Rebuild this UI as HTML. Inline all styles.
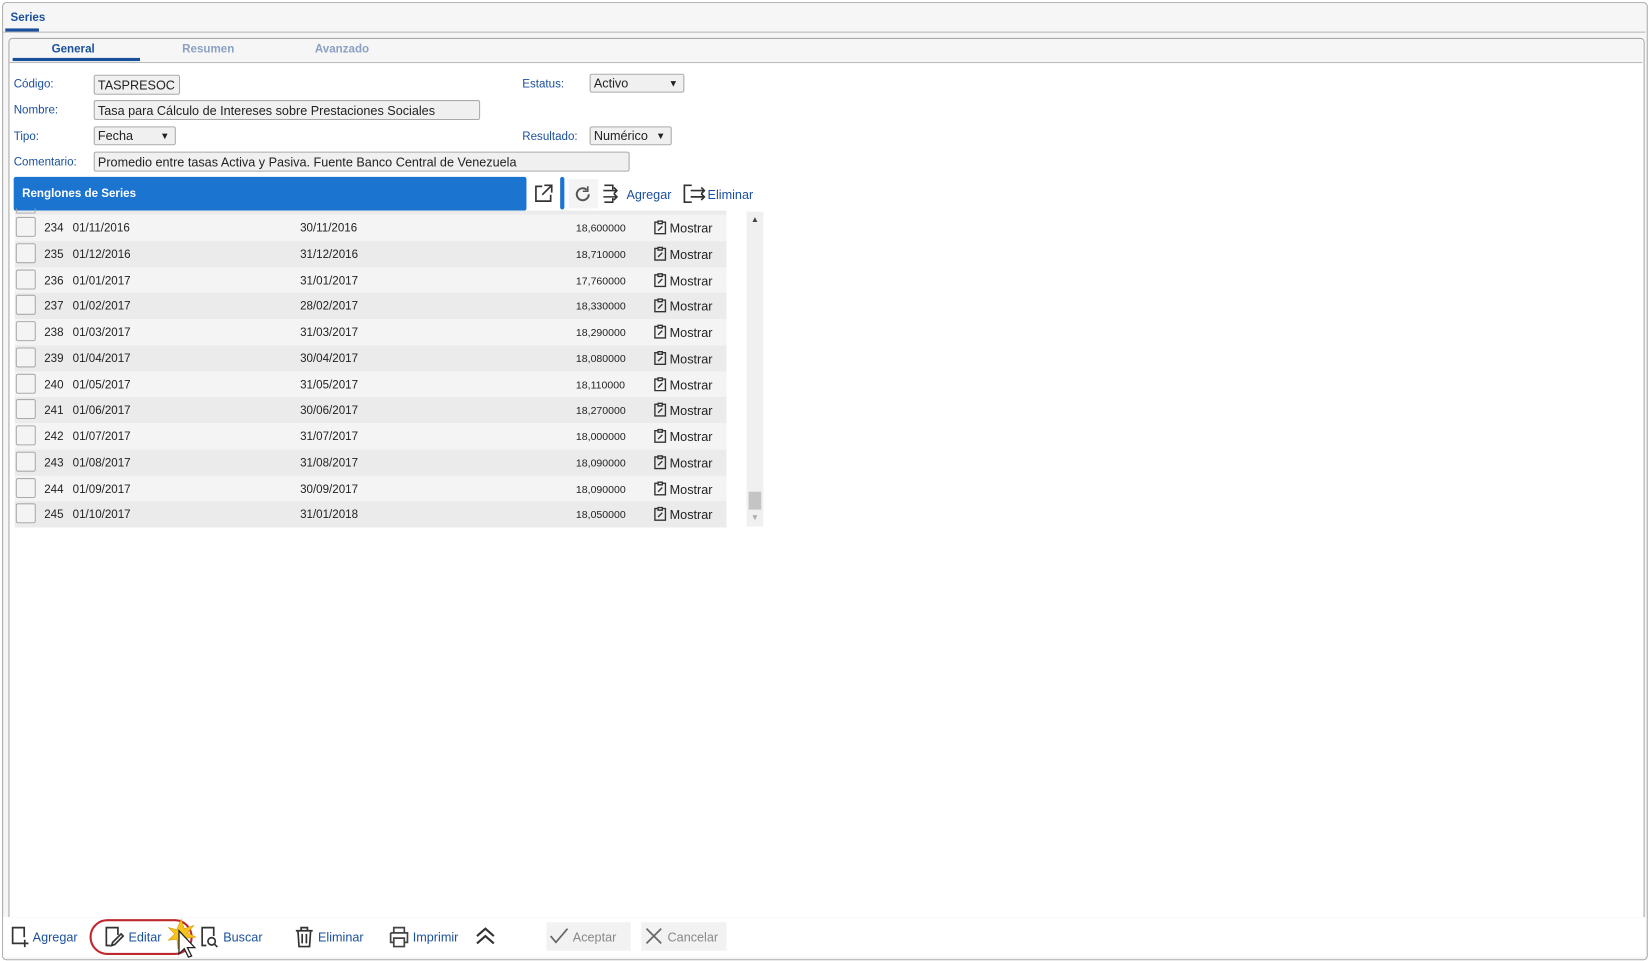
<!DOCTYPE html>
<html><head><meta charset="utf-8"><style>
html,body{margin:0;padding:0;background:#fff;width:1651px;height:961px;overflow:hidden}
#w{position:absolute;left:0;top:0;width:1568px;height:913px;transform:scale(1.0529);transform-origin:0 0;font-family:"Liberation Sans",sans-serif;color:#222}
.a{position:absolute}
.lbl{position:absolute;font-size:11px;color:#1a4f9c}
.inp{position:absolute;height:17px;border:1px solid #aaa;background:#f0f0f0;font-size:12px;line-height:17px;padding-left:3px;box-sizing:border-box;color:#222;border-radius:2px}
.row{position:absolute;left:14px;width:676px;height:25px;font-size:11px}
.cb{position:absolute;left:1px;top:2px;width:19px;height:19px;border:1px solid #aaa;border-radius:2px;background:#f4f4f4;box-sizing:border-box}
.row span{position:absolute;top:7px}
.bt{position:absolute;font-size:12px;color:#1a4f9c;top:883px}
</style></head><body><div id="w">
<div class="a" style="left:2px;top:2px;width:1561px;height:908px;border:1px solid #aaa;border-radius:4px;background:#f6f6f6"></div>
<div class="a" style="left:3px;top:3px;width:1560px;height:27px;border-bottom:1px solid #aaa;background:#f6f6f6;border-radius:4px 4px 0 0"></div>
<div class="a" style="left:10px;top:11px;font-size:11px;font-weight:bold;color:#1a4f9c">Series</div>
<div class="a" style="left:5px;top:27px;width:32px;height:3px;background:#1a4f9c"></div>
<div class="a" style="left:8px;top:36px;width:1552px;height:834px;border:1px solid #aaa;border-radius:4px 4px 0 0;background:#fff"></div>
<div class="a" style="left:9px;top:37px;width:1551px;height:22px;border-bottom:1px solid #aaa;background:#f6f6f6;border-radius:4px 4px 0 0"></div>
<div class="a" style="left:49px;top:41px;font-size:11px;font-weight:bold;color:#1a4f9c">General</div>
<div class="a" style="left:12px;top:55px;width:121px;height:3px;background:#1a4f9c"></div>
<div class="a" style="left:173px;top:41px;font-size:11px;font-weight:bold;color:#8aa0c4">Resumen</div>
<div class="a" style="left:299px;top:41px;font-size:11px;font-weight:bold;color:#8aa0c4">Avanzado</div>

<div class="lbl" style="left:13px;top:74px">Código:</div>
<div class="inp" style="left:89px;top:71px;width:82px;height:19px;line-height:19px">TASPRESOC</div>
<div class="lbl" style="left:496px;top:74px">Estatus:</div>
<div class="inp" style="left:560px;top:70px;width:90px;height:18px">Activo<span style="position:absolute;right:5px;font-size:9px">▼</span></div>
<div class="lbl" style="left:13px;top:99px">Nombre:</div>
<div class="inp" style="left:89px;top:95px;width:367px;height:19px;line-height:19px">Tasa para Cálculo de Intereses sobre Prestaciones Sociales</div>
<div class="lbl" style="left:13px;top:124px">Tipo:</div>
<div class="inp" style="left:89px;top:120px;width:78px;height:18px">Fecha<span style="position:absolute;right:5px;font-size:9px">▼</span></div>
<div class="lbl" style="left:496px;top:124px">Resultado:</div>
<div class="inp" style="left:560px;top:120px;width:78px;height:18px">Numérico<span style="position:absolute;right:5px;font-size:9px">▼</span></div>
<div class="lbl" style="left:13px;top:148px">Comentario:</div>
<div class="inp" style="left:89px;top:144px;width:509px;height:19px;line-height:19px">Promedio entre tasas Activa y Pasiva. Fuente Banco Central de Venezuela</div>

<div class="a" style="left:13px;top:168px;width:487px;height:32px;background:#1b74d0;border-radius:2px"></div>
<div class="a" style="left:21px;top:178px;font-size:11px;font-weight:bold;color:#fff">Renglones de Series</div>
<svg class="a" style="left:506px;top:174px" width="20" height="20" viewBox="0 0 20 20" fill="none" stroke="#333" stroke-width="1.6"><path d="M9 3H3v14h14v-6M11 2h7v7M18 2L9 11"/></svg>
<div class="a" style="left:532px;top:168px;width:4px;height:31px;background:#1b74d0;border-radius:2px"></div>
<div class="a" style="left:540px;top:170px;width:28px;height:28px;background:#f4f4f4"></div>
<svg class="a" style="left:544px;top:175px" width="19" height="19" viewBox="0 0 20 20" fill="none" stroke="#555" stroke-width="2"><path d="M16 10a6 6 0 1 1-2-4.5"/><path d="M15 2v5h-5" stroke-width="1.6"/></svg>
<svg class="a" style="left:571px;top:174px" width="20" height="20" viewBox="0 0 20 20" fill="none" stroke="#333" stroke-width="1.5"><path d="M3 2h8v4M11 14v4H3M2 7h13M12 4l3 3-3 3M2 13h13M12 10l3 3-3 3"/></svg>
<div class="a" style="left:595px;top:178px;font-size:12px;color:#1a4f9c">Agregar</div>
<svg class="a" style="left:648px;top:174px" width="24" height="20" viewBox="0 0 24 20" fill="none" stroke="#333" stroke-width="1.6"><path d="M9 2H2v16h7M8 7h13M18 4l3 3-3 3M8 13h13M18 10l3 3-3 3"/></svg>
<div class="a" style="left:672px;top:178px;font-size:12px;color:#1a4f9c">Eliminar</div>

<div class="a" style="left:14px;top:200px;width:676px;height:4px;background:#ebebeb"></div>
<div class="a" style="left:15px;top:198px;width:19px;height:5px;border:1px solid #aaa;border-top:none;border-radius:0 0 2px 2px;box-sizing:border-box"></div>
<div id="rows"></div>
<div class="a" style="left:709px;top:201px;width:16px;height:299px;background:#f0f0f0"></div>
<div class="a" style="left:713px;top:204px;font-size:8px;color:#444">▲</div>
<div class="a" style="left:711px;top:467px;width:12px;height:17px;background:#c4c4c4"></div>
<div class="a" style="left:713px;top:487px;font-size:8px;color:#aaa">▼</div>

<div class="a" style="left:3px;top:871px;width:1560px;height:38px;background:#fff"></div>
<svg class="a" style="left:9px;top:879px" width="20" height="22" viewBox="0 0 20 22" fill="none" stroke="#333" stroke-width="1.6"><path d="M12 17H3V2h11v9M11 17h7M14.5 13.5v7"/></svg>
<div class="bt" style="left:31px">Agregar</div>
<div class="a" style="left:85px;top:873px;width:98px;height:34px;border:2px solid #c0272d;border-radius:17px;box-sizing:border-box"></div>
<svg class="a" style="left:98px;top:879px" width="20" height="22" viewBox="0 0 20 22" fill="none" stroke="#333" stroke-width="1.6"><path d="M7 19H3V2h11v7M8 19l1-3 8-8 2 2-8 8z"/></svg>
<div class="bt" style="left:122px">Editar</div>
<svg class="a" style="left:158px;top:870px" width="30" height="42" viewBox="0 0 30 42"><path d="M14 3l3 9 9-3-6 7 8 4-9 1 3 8-7-6-4 8-1-9-8 1 6-6-6-6 8 2z" fill="#f6c21c" stroke="#d89a00" stroke-width=".6"/><path d="M12 14v22l5-5 4 8 3-1-4-8h7z" fill="#fff" stroke="#222" stroke-width="1.2"/></svg>
<svg class="a" style="left:189px;top:879px" width="20" height="22" viewBox="0 0 20 22" fill="none" stroke="#333" stroke-width="1.6"><path d="M7 19H3V2h11v8"/><circle cx="12" cy="15" r="3.5"/><path d="M14.5 17.5l3 3"/></svg>
<div class="bt" style="left:212px">Buscar</div>
<svg class="a" style="left:279px;top:879px" width="20" height="22" viewBox="0 0 20 22" fill="none" stroke="#333" stroke-width="1.6"><path d="M2 5h16M7 5V2h6v3M4 5l1 15h10l1-15M8 8v9M12 8v9"/></svg>
<div class="bt" style="left:302px">Eliminar</div>
<svg class="a" style="left:369px;top:879px" width="20" height="22" viewBox="0 0 20 22" fill="none" stroke="#444" stroke-width="1.6"><path d="M5 7V2h10v5M2 7h16v9h-3M5 16H2V7M5 12h10v8H5z"/></svg>
<div class="bt" style="left:392px">Imprimir</div>
<svg class="a" style="left:451px;top:880px" width="20" height="18" viewBox="0 0 20 18" fill="none" stroke="#333" stroke-width="2"><path d="M2 9l8-7 8 7M2 16l8-7 8 7"/></svg>
<div class="a" style="left:519px;top:876px;width:80px;height:27px;background:#f2f2f2"></div>
<svg class="a" style="left:522px;top:881px" width="18" height="16" viewBox="0 0 18 16" fill="none" stroke="#666" stroke-width="1.6"><path d="M1 8l5 6L17 1"/></svg>
<div class="bt" style="left:544px;color:#888">Aceptar</div>
<div class="a" style="left:609px;top:876px;width:81px;height:27px;background:#f2f2f2"></div>
<svg class="a" style="left:613px;top:881px" width="16" height="16" viewBox="0 0 16 16" fill="none" stroke="#666" stroke-width="1.6"><path d="M1 1l14 14M15 1L1 15"/></svg>
<div class="bt" style="left:634px;color:#888">Cancelar</div>

<script>
var d=[["234","01/11/2016","30/11/2016","18,600000"],["235","01/12/2016","31/12/2016","18,710000"],["236","01/01/2017","31/01/2017","17,760000"],["237","01/02/2017","28/02/2017","18,330000"],["238","01/03/2017","31/03/2017","18,290000"],["239","01/04/2017","30/04/2017","18,080000"],["240","01/05/2017","31/05/2017","18,110000"],["241","01/06/2017","30/06/2017","18,270000"],["242","01/07/2017","31/07/2017","18,000000"],["243","01/08/2017","31/08/2017","18,090000"],["244","01/09/2017","30/09/2017","18,090000"],["245","01/10/2017","31/01/2018","18,050000"]];
var h="";
var ic='<svg style="position:absolute;left:607px;top:5px" width="12" height="14" viewBox="0 0 12 14" fill="none" stroke="#333" stroke-width="1.3"><path d="M4 2H1v11h10V2H8M4 1h4v2.5H4zM4 10l4-4"/></svg>';
for(var i=0;i<d.length;i++){var r=d[i];h+='<div class="row" style="top:'+(204+i*24.75)+'px;background:'+(i%2?'#ebebeb':'#f4f4f4')+'"><div class="cb"></div><span style="left:28px">'+r[0]+'</span><span style="left:55px">'+r[1]+'</span><span style="left:271px">'+r[2]+'</span><span style="left:533px;font-size:10px;top:8px">'+r[3]+'</span>'+ic+'<span style="left:622px;font-size:12px;top:6px">Mostrar</span></div>';}
document.getElementById("rows").outerHTML=h;
</script>
</div></body></html>
